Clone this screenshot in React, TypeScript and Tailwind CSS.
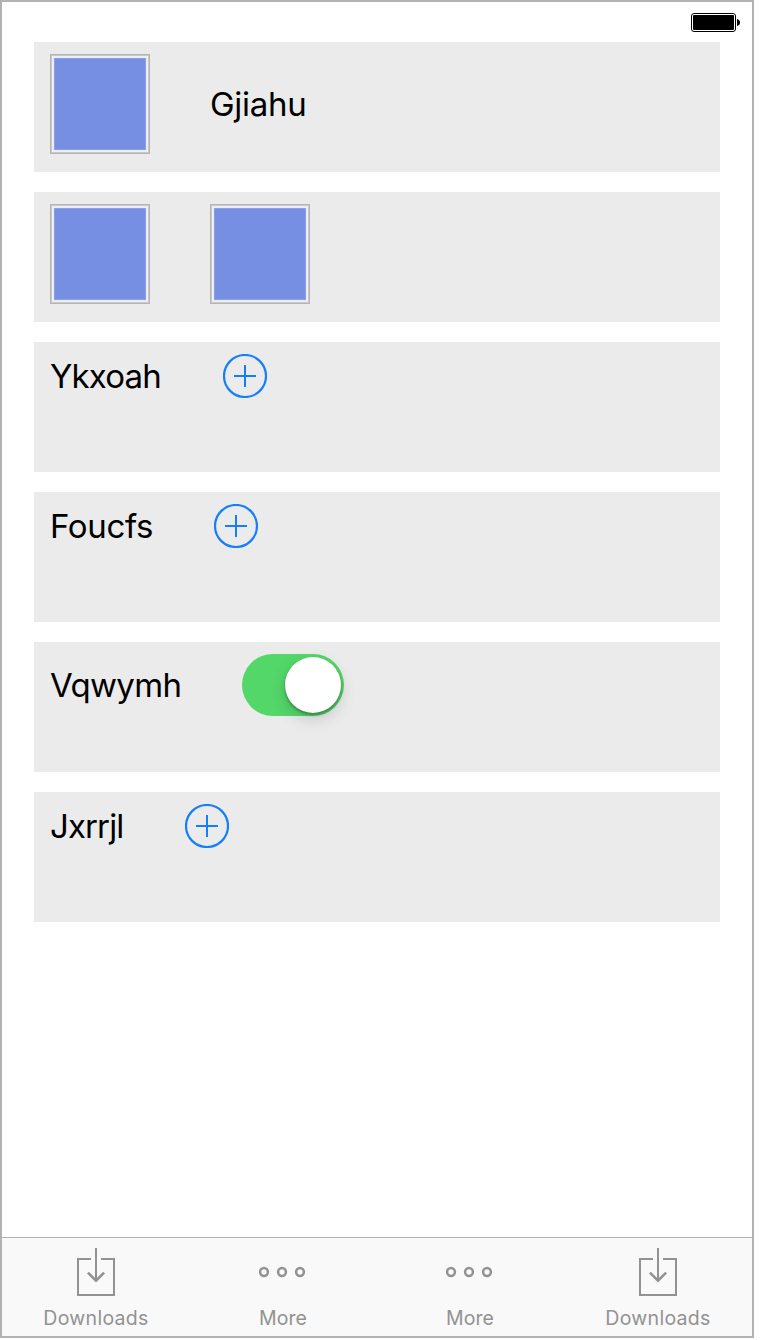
import type { ReactNode } from "react";

function Swatch() {
  return (
    <div className="size-[100px] shrink-0 border border-[#b5b5b5] bg-[#c9c9c9] p-px">
      <div className="size-full border border-[#efefef] bg-[#e9edfa] p-px">
        <div className="size-full border border-[#8b9fe8] bg-[#768fe2]" />
      </div>
    </div>
  );
}

function PlusCircle() {
  return (
    <svg className="size-11 shrink-0" viewBox="0 0 44 44" fill="none" stroke="#147efb" strokeWidth="2">
      <circle cx="22" cy="22" r="21" strokeWidth="2.2" />
      <path d="M22 11V33M11 22H33" />
    </svg>
  );
}

function Toggle() {
  return (
    <div className="flex h-[62px] w-[102px] shrink-0 justify-end rounded-full bg-[#53d769] p-[3px]">
      <div className="size-14 rounded-full bg-white shadow-[0_6px_16px_rgba(0,0,0,0.16),0_2px_3px_rgba(0,0,0,0.3)]" />
    </div>
  );
}

function Row({ children }: { children: ReactNode }) {
  return <section className="flex h-[130px] items-start gap-[60px] bg-[#ebebeb] px-4 py-3">{children}</section>;
}

function Label({ text, className }: { text: string; className: string }) {
  return <span className={"shrink-0 whitespace-nowrap text-[33px] " + className}>{text}</span>;
}

function DownloadIcon() {
  return (
    <svg className="h-12 w-[38px]" viewBox="0 0 38 48" fill="none" stroke="#929292" strokeWidth="2">
      <path d="M14 11H1V47H37V11H24M19 0V33" />
      <path d="M10.9 24.6L19 32.7L27.1 24.6" strokeWidth="2.5" />
    </svg>
  );
}

function MoreIcon() {
  return (
    <svg className="h-12 w-12" viewBox="0 0 48 48" fill="none" stroke="#929292" strokeWidth="2.5">
      <circle cx="5" cy="24" r="3.9" />
      <circle cx="23" cy="24" r="3.9" />
      <circle cx="41" cy="24" r="3.9" />
    </svg>
  );
}

function Tab({ label, icon, className }: { label: string; icon: ReactNode; className: string }) {
  return (
    <div className={"flex flex-col items-center pt-[10px] " + className}>
      {icon}
      <span className="mt-[10px] whitespace-nowrap text-[19.5px] leading-6 text-[#929292]">{label}</span>
    </div>
  );
}

export default function App() {
  return (
    <div className="h-[1340px] w-[760px] overflow-hidden bg-white font-['Inter',sans-serif] text-black">
      <div className="flex h-[1338px] w-[754px] flex-col border-2 border-[#b2b2b2] bg-white">
        <header className="flex h-10 shrink-0 justify-end pt-[11px] pr-3">
          <svg className="h-[19px] w-[49px]" viewBox="0 0 49 19">
            <rect x="0.5" y="0.5" width="44" height="18" rx="2.5" fill="none" stroke="#000" />
            <rect x="2" y="2" width="41" height="15" rx="1" />
            <path d="M46 6C48 6.5 49 7.5 49 9.5S48 12.5 46 13Z" />
          </svg>
        </header>
        <main className="flex flex-1 flex-col gap-5 px-8">
          <Row>
            <Swatch />
            <Label text="Gjiahu" className="w-[98px] leading-[100px] tracking-[-0.3px]" />
          </Row>
          <Row>
            <Swatch />
            <Swatch />
          </Row>
          <Row>
            <Label text="Ykxoah" className="w-[113px] leading-[44px] tracking-[-0.85px]" />
            <PlusCircle />
          </Row>
          <Row>
            <Label text="Foucfs" className="w-[104px] leading-[44px] tracking-[-0.35px]" />
            <PlusCircle />
          </Row>
          <Row>
            <Label text="Vqwymh" className="w-[132px] leading-[62px] tracking-[-0.65px]" />
            <Toggle />
          </Row>
          <Row>
            <Label text="Jxrrjl" className="w-[75px] leading-[44px] tracking-[-0.9px]" />
            <PlusCircle />
          </Row>
        </main>
        <footer className="flex h-[99px] shrink-0 border-t border-[#b2b2b2] bg-[#f9f9f9]">
          <Tab label="Downloads" icon={<DownloadIcon />} className="w-[188px] tracking-[0.3px]" />
          <Tab label="More" icon={<MoreIcon />} className="w-[186px] tracking-[0.1px]" />
          <Tab label="More" icon={<MoreIcon />} className="w-[188px] tracking-[0.1px]" />
          <Tab label="Downloads" icon={<DownloadIcon />} className="w-[188px] tracking-[0.3px]" />
        </footer>
      </div>
    </div>
  );
}
